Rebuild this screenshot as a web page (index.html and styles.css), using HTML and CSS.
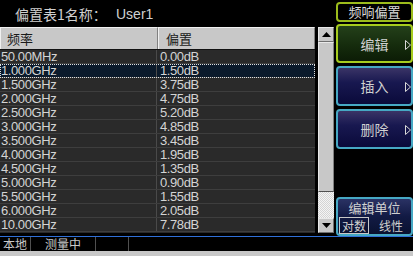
FILE: index.html
```html
<!DOCTYPE html>
<html>
<head>
 <title>偏置表</title>
 <link rel="stylesheet" href="styles.css">
</head>
<body>
 <div class="screen">
  <div class="main">
   <div class="left">
    <div class="title"><span class="title-label">偏置表1名称：</span><span class="title-name">User1</span></div>
    <div class="table-area">
     <div class="table">
      <div class="head">
       <div class="hcell freq">频率</div>
       <div class="hcell off">偏置</div>
      </div>
      <div class="rows">
       <div class="row"><div class="cell freq">50.00MHz</div><div class="cell off">0.00dB</div></div>
       <div class="row selected"><div class="cell freq">1.000GHz</div><div class="cell off">1.50dB</div></div>
       <div class="row"><div class="cell freq">1.500GHz</div><div class="cell off">3.75dB</div></div>
       <div class="row"><div class="cell freq">2.000GHz</div><div class="cell off">4.75dB</div></div>
       <div class="row"><div class="cell freq">2.500GHz</div><div class="cell off">5.20dB</div></div>
       <div class="row"><div class="cell freq">3.000GHz</div><div class="cell off">4.85dB</div></div>
       <div class="row"><div class="cell freq">3.500GHz</div><div class="cell off">3.45dB</div></div>
       <div class="row"><div class="cell freq">4.000GHz</div><div class="cell off">1.95dB</div></div>
       <div class="row"><div class="cell freq">4.500GHz</div><div class="cell off">1.35dB</div></div>
       <div class="row"><div class="cell freq">5.000GHz</div><div class="cell off">0.90dB</div></div>
       <div class="row"><div class="cell freq">5.500GHz</div><div class="cell off">1.55dB</div></div>
       <div class="row"><div class="cell freq">6.000GHz</div><div class="cell off">2.05dB</div></div>
       <div class="row"><div class="cell freq">10.00GHz</div><div class="cell off">7.78dB</div></div>
      </div>
     </div>
     <div class="scrollbar">
      <div class="sb-btn"><svg width="9" height="5" viewBox="0 0 9 5"><polygon points="0,5 9,5 4.5,0" fill="#000"/></svg></div>
      <div class="sb-thumb"></div>
      <div class="sb-track"></div>
      <div class="sb-btn"><svg width="9" height="5" viewBox="0 0 9 5"><polygon points="0,0 9,0 4.5,5" fill="#000"/></svg></div>
     </div>
    </div>
   </div>
   <div class="panel">
    <div class="btn-top">频响偏置</div>
    <div class="soft green">编辑<svg class="arrow" width="6" height="10" viewBox="0 0 6 10"><polygon points="0.5,0.5 5.5,5 0.5,9.5" fill="none" stroke="#d8d8d8" stroke-width="1"/></svg></div>
    <div class="soft blue">插入<svg class="arrow" width="6" height="10" viewBox="0 0 6 10"><polygon points="0.5,0.5 5.5,5 0.5,9.5" fill="none" stroke="#d8d8d8" stroke-width="1"/></svg></div>
    <div class="soft blue">删除<svg class="arrow" width="6" height="10" viewBox="0 0 6 10"><polygon points="0.5,0.5 5.5,5 0.5,9.5" fill="none" stroke="#d8d8d8" stroke-width="1"/></svg></div>
    <div class="unit">
     <div class="unit-title">编辑单位</div>
     <div class="unit-opts"><span class="opt on">对数</span><span class="opt">线性</span></div>
    </div>
   </div>
  </div>
  <div class="status">
   <div class="st st1">本地</div>
   <div class="st st2">测量中</div>
   <div class="st st3"></div>
   <div class="st st4"></div>
  </div>
  <div class="bottom"></div>
 </div>
</body>
</html>
```

FILE: styles.css
```css
/* Général */
body {
 margin: 0;
 background-color: #000;
 font-family: "Liberation Sans", "Noto Sans CJK SC", sans-serif;
 color: #d4d4d4;
}
.screen {
 width: 413px;
 height: 256px;
 overflow: hidden;
 display: flex;
 flex-direction: column;
}
.main {
 display: flex;
 height: 236px;
}
.left {
 width: 334px;
 display: flex;
 flex-direction: column;
}
/* Titre */
.title {
 height: 27px;
 display: flex;
 align-items: center;
 font-size: 14px;
 font-family: "Noto Sans CJK SC", sans-serif;
 color: #d0d0d0;
}
.title-label {
 margin-left: 15px;
 width: 101px;
}
.title-name {
 font-family: "Liberation Sans", sans-serif;
 font-size: 14px;
}
/* Tableau */
.table-area {
 display: flex;
}
.table {
 width: 315px;
 background-color: #2a2a2a;
}
.head {
 display: flex;
 height: 22px;
 background-color: #c8c8c8;
 border-bottom: 1px solid #111;
}
.hcell {
 font-family: "Noto Sans CJK SC", sans-serif;
 font-size: 13px;
 color: #1a1a1a;
 line-height: 22px;
 box-sizing: border-box;
 border-top: 1px solid #f0f0f0;
 border-left: 1px solid #f0f0f0;
 border-right: 1px solid #808080;
}
.hcell.freq {
 width: 158px;
 padding-left: 6px;
}
.hcell.off {
 width: 157px;
 padding-left: 7px;
}
.row {
 display: flex;
 height: 14px;
 box-sizing: border-box;
 border-bottom: 1px solid #3e3e3e;
}
.row.selected {
 background-color: #0b1a2b;
 outline: 1px dotted #e0e0e0;
 outline-offset: -1px;
}
.cell {
 font-size: 13px;
 line-height: 13px;
 letter-spacing: -0.4px;
 color: #d4d4d4;
 box-sizing: border-box;
 height: 13px;
}
.cell.freq {
 width: 157px;
 padding-left: 1px;
 border-right: 1px solid #4a4a4a;
}
.cell.off {
 width: 158px;
 padding-left: 3px;
}
/* Barre de défilement */
.scrollbar {
 width: 16px;
 margin-left: 3px;
 display: flex;
 flex-direction: column;
 height: 206px;
}
.sb-btn {
 height: 15px;
 background-color: #c8c8c8;
 border: 1px solid #e8e8e8;
 border-right-color: #707070;
 border-bottom-color: #707070;
 box-sizing: border-box;
 display: flex;
 align-items: center;
 justify-content: center;
}
.sb-thumb {
 height: 150px;
 background-color: #c8c8c8;
 border: 1px solid #e8e8e8;
 border-right-color: #808080;
 border-bottom-color: #505050;
 box-sizing: border-box;
}
.sb-track {
 flex: 1;
 background-color: #e4e4e4;
 background-image: repeating-conic-gradient(#f4f4f4 0 25%, #d4d4d4 0 50%);
 background-size: 2px 2px;
}
/* Panneau de droite */
.panel {
 width: 77px;
 margin-left: 2px;
 display: flex;
 flex-direction: column;
}
.btn-top {
 margin-top: 2px;
 height: 20px;
 border: 2px solid #9cbc1c;
 border-radius: 4px;
 box-sizing: border-box;
 font-family: "Noto Sans CJK SC", sans-serif;
 font-size: 13px;
 line-height: 16px;
 text-align: center;
 color: #dcdcdc;
}
.soft {
 position: relative;
 height: 40px;
 box-sizing: border-box;
 border-radius: 4px;
 display: flex;
 align-items: center;
 justify-content: center;
 font-family: "Noto Sans CJK SC", sans-serif;
 font-size: 14px;
 color: #d0d0d0;
 margin-top: 3px;
}
.soft.green {
 margin-top: 2px;
 height: 39px;
 border: 2px solid #a6cc1e;
 background: linear-gradient(#24401a, #142a0c 60%, #0c1c06);
}
.soft.blue {
 border: 2px solid #46a8c4;
 background: linear-gradient(#3a3466, #181850 40%, #0a0a3a);
}
.arrow {
 position: absolute;
 right: 0;
 top: 14px;
}
.unit {
 margin-top: auto;
 height: 39px;
 box-sizing: border-box;
 border: 2px solid #46a8c4;
 border-radius: 4px;
 background: linear-gradient(#2a3264, #121a44 50%, #0a1230);
 font-family: "Noto Sans CJK SC", sans-serif;
 color: #d0d0d0;
}
.unit-title {
 font-size: 13px;
 line-height: 18px;
 text-align: center;
}
.unit-opts {
 display: flex;
 justify-content: space-between;
 padding: 0 5px 0 1px;
 font-size: 12px;
 line-height: 13px;
}
.opt {
 padding: 1px 2px;
 border: 1px solid transparent;
}
.opt.on {
 border-color: #c8c8c8;
}
/* Barre d'état */
.status {
 display: flex;
 height: 14px;
 border-top: 1px solid #3070d8;
 background-color: #000;
 font-family: "Noto Sans CJK SC", sans-serif;
 font-size: 12px;
 line-height: 14px;
 color: #c8c8c8;
}
.st {
 border-right: 1px solid #505050;
 box-sizing: border-box;
}
.st1 {
 width: 31px;
 padding-left: 3px;
}
.st2 {
 width: 65px;
 padding-left: 14px;
}
.st3 {
 width: 33px;
}
.st4 {
 border-right: none;
 flex: 1;
}
.bottom {
 flex: 1;
 background-color: #c8c8c8;
}
```
